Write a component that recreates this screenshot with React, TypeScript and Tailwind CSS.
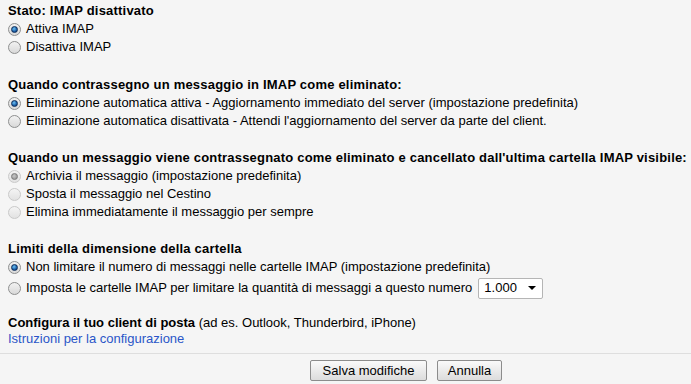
import React from "react";

type RadioProps = { checked?: boolean; disabled?: boolean };

const Radio: React.FC<RadioProps> = ({ checked, disabled }) => {
  const ring = disabled
    ? "border-[#c9c9c9] bg-gradient-to-b from-[#f4f4f4] to-[#e2e2e2]"
    : "border-[#8e8f8f] bg-gradient-to-b from-[#f2f2f2] to-[#d9d9d9]";
  const dot = disabled
    ? "bg-[radial-gradient(circle_at_40%_40%,#c8c8c8,#8a8a8a)] border-[#7a7a7a]"
    : "bg-[radial-gradient(circle_at_40%_35%,#6fc3f5,#1a5fa8_60%,#0c2f63)] border-[#0d2d5a]";
  return (
    <span
      className={`inline-flex items-center justify-center w-[13px] h-[13px] rounded-full border shrink-0 ${ring}`}
    >
      {checked && <span className={`w-[7px] h-[7px] rounded-full border ${dot}`} />}
    </span>
  );
};

const Option: React.FC<{ label: string; checked?: boolean; disabled?: boolean }> = ({
  label,
  checked,
  disabled,
}) => (
  <div className="flex items-center h-[18px] gap-[5px]">
    <Radio checked={checked} disabled={disabled} />
    <span>{label}</span>
  </div>
);

const Header: React.FC<{ children: React.ReactNode }> = ({ children }) => (
  <div className="h-[18px] flex items-center font-bold tracking-[0.2px]">{children}</div>
);

export default function App() {
  return (
    <div
      className="w-[691px] h-[384px] bg-[#f5f5f5] text-[13px] text-black overflow-hidden"
      style={{ fontFamily: '"Liberation Sans", Arial, sans-serif' }}
    >
      <div className="pl-[8px] pt-[2px]">
        <section>
          <Header>Stato: IMAP disattivato</Header>
          <Option label="Attiva IMAP" checked />
          <Option label="Disattiva IMAP" />
        </section>

        <section className="mt-[20px]">
          <Header>Quando contrassegno un messaggio in IMAP come eliminato:</Header>
          <Option
            label="Eliminazione automatica attiva - Aggiornamento immediato del server (impostazione predefinita)"
            checked
          />
          <Option label="Eliminazione automatica disattivata - Attendi l'aggiornamento del server da parte del client." />
        </section>

        <section className="mt-[19px]">
          <Header>
            Quando un messaggio viene contrassegnato come eliminato e cancellato dall'ultima cartella IMAP visibile:
          </Header>
          <Option label="Archivia il messaggio (impostazione predefinita)" checked disabled />
          <Option label="Sposta il messaggio nel Cestino" disabled />
          <Option label="Elimina immediatamente il messaggio per sempre" disabled />
        </section>

        <section className="mt-[19px]">
          <Header>Limiti della dimensione della cartella</Header>
          <Option label="Non limitare il numero di messaggi nelle cartelle IMAP (impostazione predefinita)" checked />
          <div className="flex items-center h-[22px] gap-[5px] mt-[1px]">
            <Radio />
            <span>Imposta le cartelle IMAP per limitare la quantità di messaggi a questo numero</span>
            <div className="ml-[1px] w-[65px] h-[21px] bg-white border border-[#b5b5b5] rounded-[2px] flex items-center justify-between pl-[5px] pr-[6px]">
              <span>1.000</span>
              <span className="w-0 h-0 border-l-[4px] border-r-[4px] border-t-[4px] border-l-transparent border-r-transparent border-t-black" />
            </div>
          </div>
        </section>

        <section className="mt-[15px]">
          <div className="h-[18px] flex items-center">
            <span className="font-bold">Configura il tuo client di posta</span>
            <span>&nbsp;(ad es. Outlook, Thunderbird, iPhone)</span>
          </div>
          <div className="h-[14px] flex items-center">
            <a href="#" className="text-[#2a55c8]">
              Istruzioni per la configurazione
            </a>
          </div>
        </section>
      </div>

      <div className="mt-[7px] border-t border-[#dedede]" />

      <div className="flex gap-[10px] pl-[310px] pt-[6px]">
        <button className="w-[117px] h-[21px] border border-[#8c8c8c] rounded-[2px] bg-gradient-to-b from-[#fafafa] to-[#dcdcdc] text-[13px] leading-none">
          Salva modifiche
        </button>
        <button className="w-[65px] h-[21px] border border-[#8c8c8c] rounded-[2px] bg-gradient-to-b from-[#fafafa] to-[#dcdcdc] text-[13px] leading-none">
          Annulla
        </button>
      </div>
    </div>
  );
}
